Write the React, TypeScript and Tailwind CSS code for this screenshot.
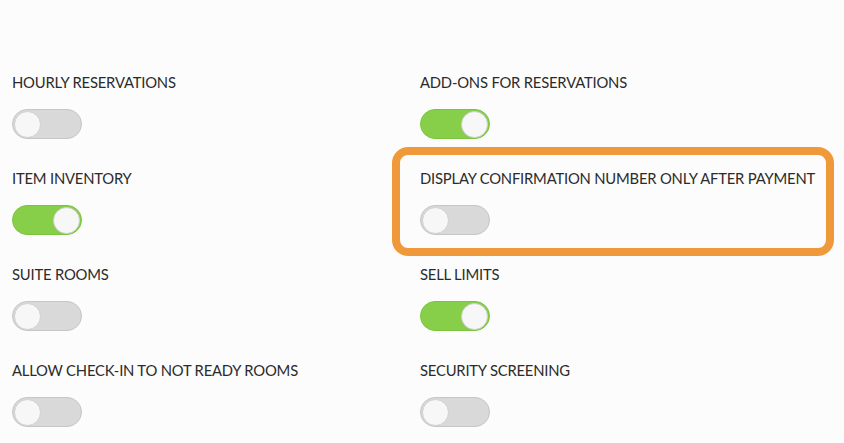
import React from "react";

type Setting = { label: string; on: boolean; highlight?: boolean };

const settings: Setting[] = [
  { label: "HOURLY RESERVATIONS", on: false },
  { label: "ADD-ONS FOR RESERVATIONS", on: true },
  { label: "ITEM INVENTORY", on: true },
  { label: "DISPLAY CONFIRMATION NUMBER ONLY AFTER PAYMENT", on: false, highlight: true },
  { label: "SUITE ROOMS", on: false },
  { label: "SELL LIMITS", on: true },
  { label: "ALLOW CHECK-IN TO NOT READY ROOMS", on: false },
  { label: "SECURITY SCREENING", on: false },
];

function Toggle({ on }: { on: boolean }) {
  return (
    <div
      className={
        on
          ? "w-[70px] h-[30px] rounded-full bg-[#87cf48] border border-[#7cc43e] flex items-center justify-end px-px"
          : "w-[70px] h-[30px] rounded-full bg-[#d9d9d9] border border-[#c6c6c6] flex items-center justify-start px-px"
      }
    >
      <div className="w-[27px] h-[27px] rounded-full bg-[#f7f7f7] border border-[#d0d0d0]" />
    </div>
  );
}

function SettingItem({ s }: { s: Setting }) {
  return (
    <div className="relative h-[96px]">
      {/* Highlight frame */}
      {s.highlight && (
        <div className="absolute left-[-28px] top-[-21px] w-[442px] h-[109px] rounded-[16px] border-[8px] border-[#f0993a]" />
      )}
      <div className="relative text-[14.8px] leading-[20px] text-[#2b2b2b] tracking-[-0.2px]">{s.label}</div>
      <div className="relative mt-[17px]">
        <Toggle on={s.on} />
      </div>
    </div>
  );
}

export default function App() {
  return (
    <div
      className="w-[844px] h-[443px] bg-[#fcfcfc] overflow-hidden pt-[72px]"
      style={{ fontFamily: "Lato, 'Noto Sans', sans-serif" }}
    >
      <div className="grid grid-cols-[408px_1fr] pl-[12px]">
        {settings.map((s) => (
          <SettingItem key={s.label} s={s} />
        ))}
      </div>
    </div>
  );
}
